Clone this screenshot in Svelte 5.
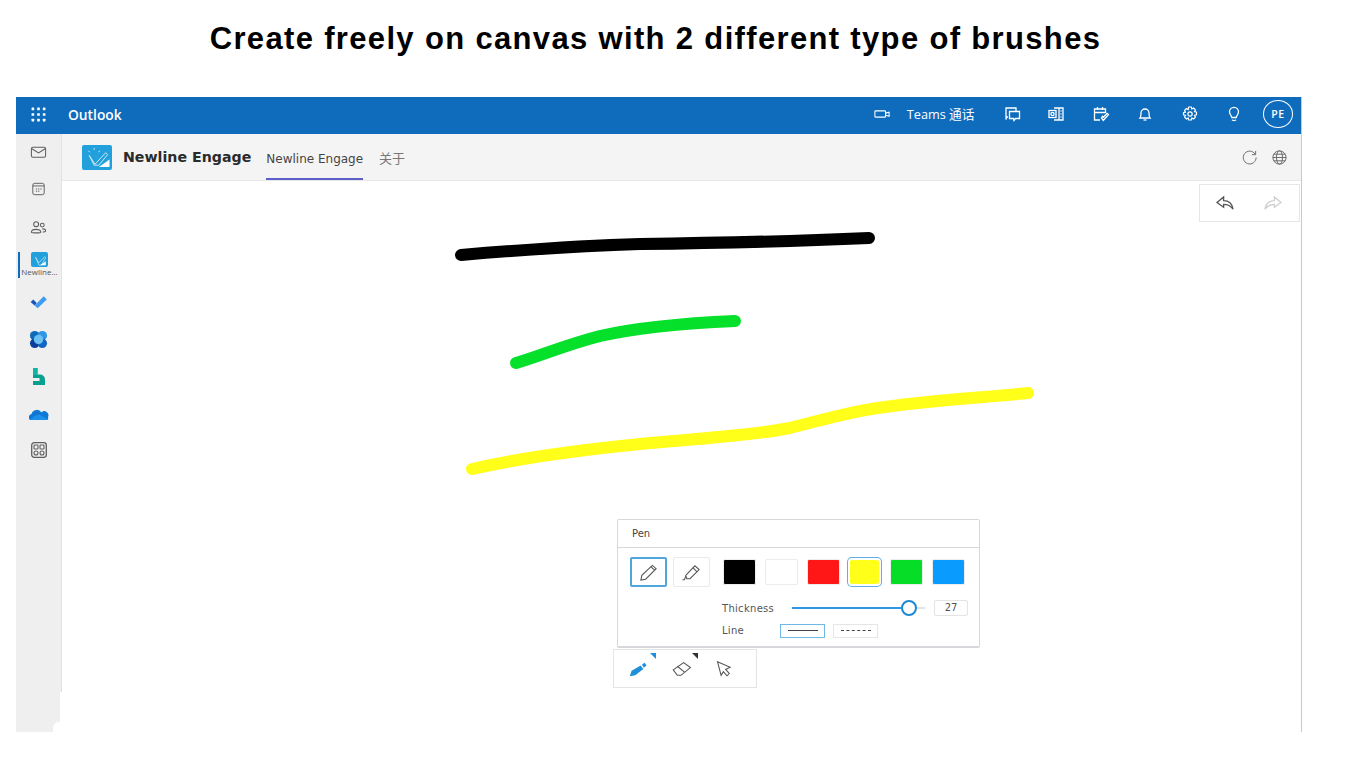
<script lang="ts">
const swatches = [
    { color: '#000000', selected: false },
    { color: '#ffffff', selected: false },
    { color: '#ff1616', selected: false },
    { color: '#ffff1a', selected: true },
    { color: '#05dd26', selected: false },
    { color: '#0a9bff', selected: false }
];

const strokes = [
    { color: '#000000', width: 12, d: 'M461 255 C520 250 570 246 640 244 C720 243 800 241 869 238' },
    { color: '#05e02b', width: 12, d: 'M516 363 C540 356 565 345 600 336 C640 327 690 323 735 321' },
    { color: '#ffff1a', width: 12, d: 'M472 469 C520 458 580 450 640 444 C700 438 750 436 790 428 C830 418 850 411 900 405 C950 399 990 397 1028 393' }
];
</script>

<svelte:head>
    <title>Newline Engage</title>
</svelte:head>

<main class="page">
    <h1>Create freely on canvas with 2 different type of brushes</h1>

    <div class="window">
        <header class="topbar">
            <svg class="waffle" viewBox="0 0 16 16" fill="#fff">
                {#each [2, 8, 14] as y}
                    {#each [2, 8, 14] as x}
                        <rect x={x - 1.4} y={y - 1.4} width="2.8" height="2.8" rx="0.4" />
                    {/each}
                {/each}
            </svg>
            <span class="brand">Outlook</span>
            <div class="top-actions">
                <svg class="ti video" viewBox="0 0 18 12" fill="none" stroke="#fff" stroke-width="1.2">
                    <rect x="1" y="2.5" width="12" height="7" rx="0.8" />
                    <path d="M13 5l4-1v4.500L13 7.500" />
                </svg>
                <span class="teams">Teams 通话</span>
                <svg class="ti chat" viewBox="0 0 18 18" fill="none" stroke="#fff" stroke-width="1.3">
                    <path d="M5 12H3.500L3 14.500V3h10v3" />
                    <path d="M6.500 6.500h10v7h-4l-1.500 2-0.500-2h-4z" />
                </svg>
                <svg class="ti office" viewBox="0 0 18 18" fill="none" stroke="#fff" stroke-width="1.3">
                    <path d="M7 3h9v12H7M12 3v12M13.500 6h1M13.500 9h1M13.500 12h1" />
                    <rect x="2" y="5.500" width="7" height="7" fill="#0f6cbd" />
                    <circle cx="5.500" cy="9" r="1.600" />
                </svg>
                <svg class="ti tasks" viewBox="0 0 18 18" fill="none" stroke="#fff" stroke-width="1.3">
                    <path d="M8 15H2.500V4h11v4M2.500 7.500h11M5.500 2v3M10.500 2v3" />
                    <path d="M9.500 13l1.800 2.500L16.500 9.500l-1.500-1.200-3.500 4-1-1z" />
                </svg>
                <svg class="ti bell" viewBox="0 0 18 18" fill="none" stroke="#fff" stroke-width="1.3">
                    <path d="M4 13c1-1.200 1-2.500 1-5a4 4 0 0 1 8 0c0 2.500 0 3.800 1 5z" />
                    <path d="M7.500 15h3" />
                </svg>
                <svg class="ti gear" viewBox="0 0 18 18" fill="none" stroke="#fff" stroke-width="1.2">
                    <circle cx="9" cy="9" r="2.200" />
                    <path d="M7.700 2h2.600l.5 2 1.800-.9 1.800 1.800-.9 1.800 2 .5v2.600l-2 .5.9 1.800-1.800 1.800-1.800-.9-.5 2H7.700l-.5-2-1.800.9-1.800-1.800.9-1.800-2-.5V7.700l2-.5-.9-1.800 1.800-1.800 1.800.9z" />
                </svg>
                <svg class="ti bulb" viewBox="0 0 18 18" fill="none" stroke="#fff" stroke-width="1.3">
                    <path d="M6.800 12.500C6.500 10.500 4.500 9.500 4.500 6.800a4.500 4.500 0 0 1 9 0c0 2.700-2 3.700-2.300 5.700z" />
                    <path d="M7 14.800c.5 1 3.500 1 4 0" />
                </svg>
                <span class="avatar">PE</span>
            </div>
        </header>

        <div class="body">
            <nav class="rail">
                <svg class="ri" viewBox="0 0 18 14" fill="none" stroke="#5f5f5f" stroke-width="1.100">
                    <rect x="1.500" y="2" width="15" height="10.500" rx="1.500" />
                    <path d="M2 3.500l7 4.500 7-4.500" />
                </svg>
                <svg class="ri cal" viewBox="0 0 16 16" fill="none" stroke="#5f5f5f" stroke-width="1.100">
                    <rect x="1.500" y="1.500" width="13" height="13" rx="2" />
                    <path d="M1.500 4.500h13M5 8h1.500M7.500 8h1.500M10 8h1.500M5 10.500h1.500M7.500 10.500h1.500" />
                </svg>
                <svg class="ri people" viewBox="0 0 18 14" fill="none" stroke="#5f5f5f" stroke-width="1.100">
                    <circle cx="6.500" cy="4" r="2.600" />
                    <path d="M1.500 12.500c0-4 10-4 10 0 0 1-10 1-10 0z" />
                    <circle cx="13" cy="5" r="2" />
                    <path d="M13 9c2 0 3.500.6 3.500 2 0 1-1.500 1.300-3 1.200" />
                </svg>
                <div class="rail-app">
                    <span class="app-mark small">
                        <svg viewBox="0 0 30 26"><path d="M8 9l6 10L24 8l2 2-8 13-4 0z" fill="none" stroke="#cfeaf8" stroke-width="1.200" /><path d="M16 23l10-7v7z" fill="#fff" /></svg>
                    </span>
                    <span class="rail-label">Newline...</span>
                </div>
                <svg class="ri todo" viewBox="0 0 20 16">
                    <path d="M1 8l3-3 4 4-2.500 3z" fill="#1a55b8" />
                    <path d="M5.500 12L16 1.500 19.500 5 9 15z" fill="#3f9cf0" />
                </svg>
                <svg class="ri loop" viewBox="0 0 20 20">
                    <circle cx="6" cy="6" r="5" fill="#0f6cbd" />
                    <circle cx="14" cy="6" r="5" fill="#2f96e8" />
                    <circle cx="6" cy="14" r="5" fill="#0b3f9b" />
                    <circle cx="14" cy="14" r="5" fill="#1464c4" />
                    <circle cx="10" cy="10" r="5" fill="#6cc0f2" />
                </svg>
                <svg class="ri bookings" viewBox="0 0 14 18">
                    <path d="M1.500 0h4.500v6.500h2.500a5 5 0 0 1 5 5V17H1.500v-4h6.500v-3H1.500z" fill="#0aa08f" />
                    <path d="M1.500 0h4.500v7H1.500z" fill="#0fb5a2" />
                </svg>
                <svg class="ri cloud" viewBox="0 0 20 12">
                    <path d="M1 11a3.500 3.500 0 0 1 1.500-6 5.500 5.500 0 0 1 10-1.500A4 4 0 0 1 19 8c.6 1.500 0 3-1.500 3z" fill="#0f78d4" />
                    <path d="M1 11c2-3 8-6 10-5s7 3 7 5z" fill="#1c90e8" />
                </svg>
                <svg class="ri apps" viewBox="0 0 16 16" fill="none" stroke="#5f5f5f" stroke-width="1.100">
                    <rect x="0.700" y="0.700" width="14.600" height="14.600" rx="2.500" stroke-width="1.300" />
                    <rect x="3" y="3" width="4" height="4" rx="0.800" />
                    <rect x="9" y="3" width="4" height="4" rx="0.800" />
                    <circle cx="5" cy="11" r="2" />
                    <circle cx="11" cy="11" r="2" />
                </svg>
                <span class="rail-smudge"></span>
            </nav>

            <section class="content">
                <div class="tabbar">
                    <span class="app-mark">
                        <svg viewBox="0 0 30 26">
                            <path d="M7 11l6 9 11-12 2 2-9 11h-5z" fill="none" stroke="#cfeaf8" stroke-width="1" />
                            <path d="M12 3v2M6 6l1.500 1.500M18 6l-1.500 1.500" stroke="#cfeaf8" stroke-width="1" />
                            <path d="M17 23l11-8v8z" fill="#fff" />
                        </svg>
                    </span>
                    <span class="app-name">Newline Engage</span>
                    <span class="tab active">Newline Engage</span>
                    <span class="tab about">关于</span>
                    <div class="tab-icons">
                        <svg viewBox="0 0 18 18" fill="none" stroke="#666" stroke-width="1">
                            <path d="M15 5.500A6.800 6.800 0 1 0 16 9" />
                            <path d="M15.500 2v4h-4" />
                        </svg>
                        <svg viewBox="0 0 18 18" fill="none" stroke="#666" stroke-width="1">
                            <circle cx="9" cy="9" r="7" />
                            <ellipse cx="9" cy="9" rx="3.200" ry="7" />
                            <path d="M2 9h14M3 5.500h12M3 12.500h12" />
                        </svg>
                    </div>
                </div>

                <div class="canvas">
                    <svg class="ink" viewBox="62 181 1239 551" fill="none">
                        {#each strokes as s}
                            <path d={s.d} stroke={s.color} stroke-width={s.width} stroke-linecap="round" stroke-linejoin="round" />
                        {/each}
                    </svg>

                    <div class="undo-box">
                        <svg viewBox="0 0 22 18" fill="none" stroke="#555" stroke-width="1.400">
                            <path d="M9 2L2 8l7 5V10c4 0 7 1 10 5-1-6-4-9-10-9z" />
                        </svg>
                        <svg viewBox="0 0 22 18" fill="none" stroke="#cfcfcf" stroke-width="1.400">
                            <path d="M13 2l7 6-7 5V10c-4 0-7 1-10 5 1-6 4-9 10-9z" />
                        </svg>
                    </div>

                    <div class="pen-panel">
                        <div class="pen-title">Pen</div>
                        <div class="pen-body">
                            <div class="pen-row">
                                <button class="brush on" aria-label="Pen">
                                    <svg viewBox="0 0 22 22" fill="none" stroke="#555" stroke-width="1.100">
                                        <path d="M3 19l1-5L15 3.500l4 3.500L8 18z" />
                                        <path d="M13.500 5l4 3.500" />
                                    </svg>
                                </button>
                                <button class="brush" aria-label="Highlighter">
                                    <svg viewBox="0 0 22 22" fill="none" stroke="#555" stroke-width="1.100">
                                        <path d="M5 14L14.500 4l4.500 4-9.500 9.500H6z" />
                                        <path d="M5 15l-1.500 3.500h-2M12.500 6l4.500 4.500" />
                                    </svg>
                                </button>
                                <div class="swatches">
                                    {#each swatches as s}
                                        <span class="swatch" class:selected={s.selected} style="background: {s.color}"></span>
                                    {/each}
                                </div>
                            </div>
                            <div class="option thick">
                                <span class="opt-label">Thickness</span>
                                <div class="slider">
                                    <span class="track"></span>
                                    <span class="thumb"></span>
                                </div>
                                <span class="value">27</span>
                            </div>
                            <div class="option line">
                                <span class="opt-label">Line</span>
                                <span class="line-btn on"><i></i></span>
                                <span class="line-btn"><i class="dash"></i></span>
                            </div>
                        </div>
                    </div>

                    <div class="tools">
                        <div class="tool">
                            <svg viewBox="0 0 24 20" fill="#1e8fd8">
                                <path d="M2 18l2-6L14 6l3 4-9 7z" />
                                <path d="M15.500 5l3-2 2 3-3 2.500z" />
                            </svg>
                            <span class="corner blue"></span>
                        </div>
                        <div class="tool">
                            <svg viewBox="0 0 24 20" fill="none" stroke="#555" stroke-width="1.200">
                                <path d="M2.500 11L14 3l7.500 5.500L11 17H7z" />
                                <path d="M7 7l8 6.500" />
                            </svg>
                            <span class="corner dark"></span>
                        </div>
                        <div class="tool">
                            <svg viewBox="0 0 24 20" fill="none" stroke="#555" stroke-width="1.200">
                                <path d="M5 2l14 6-5 2.500 4 4.500-2.500 2.500-4-4.500L9 17z" />
                            </svg>
                        </div>
                    </div>
                </div>
            </section>
        </div>
    </div>
</main>

<style>
    :global(body) {
        margin: 0;
        background: #fff;
        font-family: 'Liberation Sans', Arial, sans-serif;
        color: #333;
        overflow: hidden;
    }

    .page {
        width: 1366px;
        height: 768px;
    }

    h1 {
        margin: 0;
        height: 97px;
        box-sizing: border-box;
        padding: 21px 55px 0 0;
        text-align: center;
        font-size: 31px;
        line-height: 36px;
        font-weight: 700;
        color: #000;
        letter-spacing: 1.34px;
    }

    .window {
        margin-left: 16px;
        width: 1285px;
        height: 635px;
        display: flex;
        flex-direction: column;
        border-right: 1px solid #c9c9c9;
    }

    .topbar {
        height: 37px;
        flex: none;
        box-sizing: border-box;
        padding-bottom: 3px;
        background: #0f6cbd;
        display: flex;
        align-items: center;
        color: #fff;
    }

    .waffle {
        width: 15px;
        height: 15px;
        margin-left: 15px;
    }

    .brand {
        margin-left: 22px;
        font-family: 'Open Sans', sans-serif;
        font-weight: 600;
        font-size: 13.800px;
    }

    .top-actions {
        margin-left: auto;
        display: flex;
        align-items: center;
        padding-right: 8px;
    }

    .ti {
        width: 18px;
        height: 18px;
        margin-right: 26.500px;
    }

    .video {
        width: 16px;
        height: 12px;
        margin-right: 17px;
    }

    .teams {
        font-family: 'Open Sans', 'Noto Sans CJK SC', sans-serif;
        font-size: 12.700px;
        margin-right: 28px;
        line-height: 16px;
    }

    .bulb {
        margin-right: 20px;
    }

    .avatar {
        width: 30px;
        height: 28px;
        box-sizing: border-box;
        border: 1px solid #fff;
        border-radius: 50%;
        display: flex;
        align-items: center;
        justify-content: center;
        font-family: 'Open Sans', sans-serif;
        font-size: 10.500px;
        font-weight: 600;
        letter-spacing: 0.5px;
    }

    .body {
        flex: 1;
        display: flex;
        min-height: 0;
    }

    .rail {
        position: relative;
        width: 46px;
        flex: none;
        box-sizing: border-box;
        background: #efefef;
        border-right: 1px solid #e2e2e2;
        display: flex;
        flex-direction: column;
        align-items: center;
        padding-top: 11px;
    }

    /* white smudge over the rail's lower corner, it is in the source image */
    .rail-smudge {
        position: absolute;
        right: -1px;
        bottom: 0;
        width: 9px;
        height: 10px;
        background: #fff;
        border-top-left-radius: 6px;
    }

    .rail-smudge::before {
        content: '';
        position: absolute;
        right: 0;
        bottom: 10px;
        width: 2px;
        height: 30px;
        background: #fff;
    }

    .ri {
        width: 17px;
        height: 14px;
        margin-bottom: 23px;
        flex: none;
    }

    .cal {
        height: 14px;
        margin-bottom: 24px;
    }

    .people {
        margin-bottom: 17px;
    }

    .rail-app {
        position: relative;
        width: 46px;
        display: flex;
        flex-direction: column;
        align-items: center;
        height: 27px;
        margin-bottom: 17px;
    }

    .rail-app::before {
        content: '';
        position: absolute;
        left: 2px;
        top: 1px;
        width: 2px;
        height: 26px;
        background: #0f6cbd;
    }

    .rail-label {
        font-family: 'Open Sans', sans-serif;
        font-size: 8px;
        line-height: 10px;
        color: #555;
        margin-left: 2px;
    }

    .todo {
        width: 19px;
        margin-bottom: 21px;
    }

    .loop {
        width: 19px;
        height: 19px;
        margin-bottom: 19px;
    }

    .bookings {
        height: 18px;
        margin-bottom: 23px;
    }

    .cloud {
        width: 20px;
        height: 12px;
        margin-bottom: 21px;
    }

    .apps {
        width: 16px;
        height: 16px;
    }

    .content {
        flex: 1;
        display: flex;
        flex-direction: column;
        min-width: 0;
    }

    .tabbar {
        height: 47px;
        flex: none;
        box-sizing: border-box;
        background: #f4f4f4;
        border-bottom: 1px solid #e8e8e8;
        display: flex;
        align-items: center;
        padding-left: 20px;
    }

    .app-mark {
        width: 30px;
        height: 25px;
        background: #22a0dc;
        border-radius: 2px;
        display: flex;
        flex: none;
    }

    .app-mark svg {
        width: 100%;
        height: 100%;
    }

    .app-mark.small {
        width: 17px;
        height: 15px;
        margin-top: 1px;
        margin-left: 2px;
    }

    .app-name {
        margin-left: 11px;
        font-family: 'DejaVu Sans', sans-serif;
        font-weight: 700;
        font-size: 14.200px;
        color: #2b2b2b;
    }

    .tab {
        font-family: 'DejaVu Sans', 'Noto Sans CJK SC', sans-serif;
        font-size: 12px;
        color: #444;
    }

    .tab.active {
        margin-left: 15px;
        height: 46px;
        line-height: 50px;
        box-sizing: border-box;
        border-bottom: 2px solid #5b5fc7;
    }

    .tab.about {
        margin-left: 16px;
        color: #777;
        font-size: 13px;
    }

    .tab-icons {
        margin-left: auto;
        display: flex;
        gap: 13px;
        padding-right: 13px;
    }

    .tab-icons svg {
        width: 17px;
        height: 17px;
    }

    .canvas {
        position: relative;
        flex: 1;
        background: #fff;
    }

    .ink {
        position: absolute;
        inset: 0;
        width: 100%;
        height: 100%;
    }

    .undo-box {
        position: absolute;
        left: 1137px;
        top: 3px;
        width: 101px;
        height: 38px;
        box-sizing: border-box;
        border: 1px solid #e6e6e6;
        display: flex;
        align-items: center;
        gap: 26px;
        padding-left: 15px;
    }

    .undo-box svg {
        width: 21px;
        height: 17px;
    }

    .pen-panel {
        position: absolute;
        left: 555px;
        top: 338px;
        width: 363px;
        height: 129px;
        box-sizing: border-box;
        background: #fff;
        border: 1px solid #d6d8dc;
        border-bottom-width: 2px;
        border-radius: 2px;
        font-family: 'DejaVu Sans', sans-serif;
        font-size: 10px;
        color: #555;
    }

    .pen-title {
        height: 28px;
        box-sizing: border-box;
        border-bottom: 1px solid #d6d8dc;
        padding-left: 14px;
        line-height: 27px;
        color: #444;
    }

    .pen-body {
        padding: 9px 0 0 12px;
    }

    .pen-row {
        display: flex;
        align-items: center;
    }

    .brush {
        width: 37px;
        height: 30px;
        padding: 0;
        margin-right: 6px;
        background: #fff;
        border: 1px solid #eaeaea;
        border-radius: 2px;
        display: flex;
        align-items: center;
        justify-content: center;
    }

    .brush.on {
        border: 2px solid #4ea6dc;
    }

    .brush svg {
        width: 21px;
        height: 21px;
    }

    .swatches {
        display: flex;
        gap: 8.800px;
        margin-left: 7px;
    }

    .swatch {
        width: 33px;
        height: 26px;
        border-radius: 2px;
        box-sizing: border-box;
        border: 1px solid #ececec;
    }

    .swatch.selected {
        box-shadow: 0 0 0 2px #fff, 0 0 0 3px #5fb0e2;
        width: 29px;
        height: 24px;
        margin: 1px 2px;
        border: none;
    }

    .option {
        display: flex;
        align-items: center;
        margin-left: 92px;
    }

    .thick {
        margin-top: 13px;
        height: 16px;
    }

    .line {
        margin-top: 7px;
        height: 15px;
    }

    .opt-label {
        width: 59px;
        flex: none;
        letter-spacing: 0.3px;
    }

    .line .opt-label {
        width: 58px;
    }

    .slider {
        position: relative;
        width: 133px;
        height: 2px;
        margin-left: 11px;
        background: #e2e2e2;
    }

    .track {
        position: absolute;
        left: 0;
        top: 0;
        height: 2px;
        width: 116px;
        background: #2f96e0;
    }

    .thumb {
        position: absolute;
        left: 109px;
        top: -7px;
        width: 16px;
        height: 16px;
        box-sizing: border-box;
        border: 2px solid #2088d0;
        border-radius: 50%;
        background: #fff;
    }

    .value {
        margin-left: 9px;
        width: 34px;
        height: 16px;
        box-sizing: border-box;
        border: 1px solid #e4e4e4;
        border-radius: 2px;
        text-align: center;
        line-height: 14px;
    }

    .line-btn {
        width: 45px;
        height: 14px;
        box-sizing: border-box;
        border: 1px solid #e6e6e6;
        margin-right: 8px;
        display: flex;
        align-items: center;
        justify-content: center;
    }

    .line-btn.on {
        border-color: #6db8e6;
    }

    .line-btn i {
        width: 30px;
        border-top: 1px solid #444;
    }

    .line-btn i.dash {
        border-top-style: dashed;
    }

    .tools {
        position: absolute;
        left: 551px;
        top: 468px;
        width: 144px;
        height: 39px;
        box-sizing: border-box;
        border: 1px solid #e4e4e4;
        display: flex;
        align-items: center;
        padding-left: 14px;
        background: #fff;
    }

    .tool {
        position: relative;
        width: 24px;
        height: 20px;
        margin-right: 21px;
    }

    .tool svg {
        width: 100%;
        height: 100%;
    }

    .corner {
        position: absolute;
        right: -6px;
        top: -6px;
        width: 0;
        height: 0;
        border-top: 6px solid #1e8fd8;
        border-left: 6px solid transparent;
    }

    .corner.dark {
        border-top-color: #333;
    }
</style>
